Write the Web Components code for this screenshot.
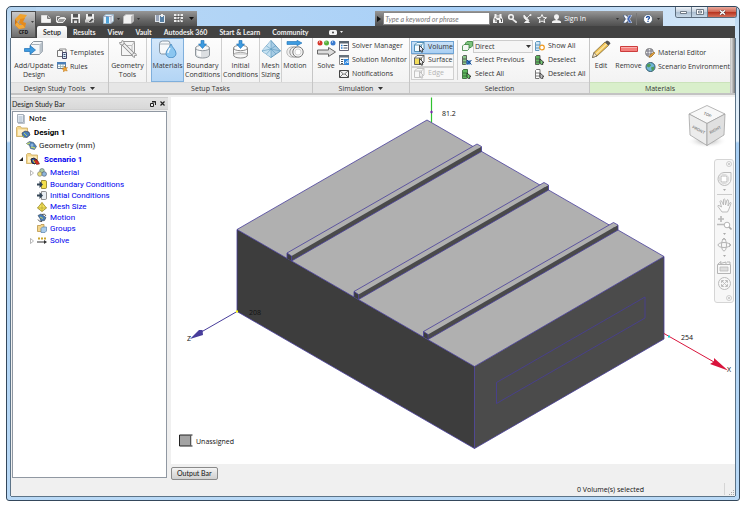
<!DOCTYPE html>
<html lang="en">
<head>
<meta charset="utf-8">
<title>CFD - Design Study</title>
<style>
  body {
    margin: 0;
    padding: 6px;
    box-sizing: border-box;
    min-height: 100vh;
    display: flex;
    background: #fff;
    color: #333;
    font-family: "Open Sans", "Noto Sans", sans-serif;
    font-size: 7px;
  }
</style>
</head>
<body>
<cfd-app></cfd-app>

<script>
// [width, height, markup]
const ICONS = {
  logo: [17, 17, '<path d="M2 6 7 1l7 1-3 4-4 0-3 3z" fill="#f0a22c"/><path d="M2 6v6l4 4 6-1-3-3H7l-3-3z" fill="#c96f14"/><path d="m7 6 5-1-2 4 3 1-1 5-4-4-2-1z" fill="#e58a1c"/><path d="m4 9 3 3h3l2 3-6 1-4-4z" fill="#f3a93a"/>'],
  caret: [5, 3, '<path d="M0 0h5L2.500 3z" fill="currentColor"/>'],
  caretSmall: [3, 2, '<path d="M0 0h3L1.500 2z" fill="currentColor"/>'],
  caretRight: [4, 6, '<path d="M0 0v6l4-3z" fill="#111"/>'],
  newDoc: [10, 8, '<path d="M.5.5h6l3 3v4h-9z" fill="#f4f4f4" stroke="#ddd"/><path d="M6.500.5v3h3" fill="#aaa" stroke="#777"/>'],
  open: [10, 8, '<path d="M.5 7V1.500h3l1 1h4v1.500" fill="none" stroke="#e8e8e8"/><path d="m1 7.500 2-4h7l-3 4z" fill="#999" stroke="#eee"/>'],
  save: [9, 9, '<path d="M0 0h9v9H0z" fill="#eee"/><path d="M2 0h5v3.500H2zM1.500 5h6v4h-6z" fill="#555"/><path d="M3 6.500h3V9H3z" fill="#ddd"/>'],
  saveAs: [10, 9, '<path d="M1 0h8v6H1z" fill="#eee"/><path d="M3 0h4v2.500H3z" fill="#555"/><path d="M0 5.500h9v3H0z" fill="#ccc"/><path d="m3 8 4-4 2 1.500L5.500 9z" fill="#555" stroke="#eee" stroke-width=".7"/>'],
  cubeBlue: [11, 10, '<path d="M.5 2.500 3 .5h7.500v6.500L8 9.500H.5z" fill="#e9f2f8" stroke="#9db8c8"/><path d="M6 2.500V9.500H3V2z" fill="#4fa3d8"/><path d="M8 2.500v7m0-7L10.500.5M.5 2.500H8" stroke="#88a" stroke-width=".6" fill="none"/>'],
  cubeGrey: [11, 10, '<path d="M.5 2.500 3 .5h7.500v6.500L8 9.500H.5z" fill="#f2f2f2" stroke="#bbb"/><path d="M8 9.500v-7L10.500.5v6.500z" fill="#bbb"/>'],
  clipboard: [10, 9, '<path d="M0 1h5v7H0z" fill="#dde3ea"/><path d="M1 2h3M1 4h3M1 6h3" stroke="#568"/><path d="M4.500 1.500h5v7h-5z" fill="#567fa4" stroke="#e3eaf0"/><path d="M6 0h2v3H6z" fill="#eee"/>'],
  table: [10, 9, '<path d="M0 0h9v8H0z" fill="#eee"/><path d="M0 2.500h9M0 5.500h9M3 0v8M6 0v8" stroke="#444" stroke-width=".8"/><path d="m5 4 5 4-3 .5z" fill="#fff" stroke="#333" stroke-width=".5"/>'],
  binoculars: [10, 9, '<path d="M1.500 0h2v1.500H5h1.500V0h2v2L10 6v3H6V6H4v3H0V6l1.500-4z" fill="#f2f2f2"/><path d="M1.500 5h1.500v3M7 5h1.500v3M3.500 3h3" stroke="#555" fill="none"/>'],
  key: [10, 9, '<circle cx="3" cy="3" r="2.300" fill="none" stroke="#f2f2f2" stroke-width="1.600"/><path d="m4.500 4.500 4.500 3.500-1 1-4-3.500z" fill="#f2f2f2" stroke="#f2f2f2" stroke-width=".6"/>'],
  dish: [9, 9, '<path d="M1 1c-1 3 2 6 5 5.500zM4 4l3-3M3 7 1.500 9h5L5 7z" fill="#f2f2f2" stroke="#f2f2f2" stroke-width=".8"/><circle cx="7.500" cy="1" r="1" fill="#f2f2f2"/>'],
  star: [10, 9, '<path d="m5 .5 1.300 2.900 3.200.3L7 5.700l.8 2.900L5 7 2.200 8.600 3 5.700.5 3.700l3.200-.3z" fill="#777" stroke="#f2f2f2"/>'],
  person: [9, 9, '<circle cx="4.500" cy="2.800" r="2.500" fill="#f2f2f2"/><path d="M3.500 4h2v2h-2zM0 9V7.500Q1 6 4.500 6T9 7.500V9z" fill="#f2f2f2"/>'],
  exchange: [9, 8, '<path d="M0 0h3l2 2.500L4 4l1 1.500L3 8H0l2.500-4z" fill="#fff" stroke="#24406f" stroke-width=".6"/><path d="M9 0H6L4 4l2 4h3L6.500 4z" fill="#3d63b4" stroke="#e8eefc" stroke-width=".6"/>'],
  help: [10, 10, '<circle cx="5" cy="5" r="4.500" fill="#fff" stroke="#345" stroke-width=".6"/><path d="M3.500 4Q3.500 2.500 5 2.500T6.500 3.800Q6.500 4.600 5.500 5L5 5.800M5 6.800v1.200" stroke="#1f4f9f" stroke-width="1.300" fill="none"/>'],
  media: [8, 5, '<rect width="8" height="5" rx="1.500" fill="#f2f2f2"/><circle cx="4" cy="2.500" r="1" fill="#444"/>'],
  minimize: [7, 3, '<path d="M.5.5h6v2h-6z" fill="#fff" stroke="#56616d" stroke-width=".8"/>'],
  maximize: [8, 6, '<path d="M.5.5h7v5h-7z" fill="#fff" stroke="#56616d" stroke-width=".8"/><path d="M2.500 2h3v2h-3z" fill="#c7d2de" stroke="#56616d" stroke-width=".7"/>'],
  closeWhite: [7, 5, '<path d="m1 .5 5 4M6 .5l-5 4" stroke="#4b2b2b" stroke-width="2.400"/><path d="m1 .5 5 4M6 .5l-5 4" stroke="#fff" stroke-width="1.500"/>'],

  addUpdate: [20, 16, '<path d="M6.500 3.500 9.500.5h9v10l-3 3h-9z" fill="#f5f7f9" stroke="#8b959e"/><path d="M15.500 13.500v-10l3-3v10z" fill="#b9c2ca"/><path d="M6.500 3.500h9" stroke="#a9b2ba"/><path d="M.5 7.500h5.500V4.500L11.500 9 6 13.500V10.500H.5z" fill="#3d9be0" stroke="#1c6fb4" stroke-width=".7"/>'],
  templates: [11, 11, '<path d="M.5 2.500h5v6h-5z" fill="#fafafa" stroke="#777"/><path d="M2.500 2V1h6.500V4" fill="none" stroke="#888"/><path d="M5.500 4.500h4v6h-4z" fill="#dfe9f4" stroke="#446"/><path d="M6.500 6.500h2M6.500 8.500h2" stroke="#357"/>'],
  rules: [11, 10, '<path d="M.5.5h8v6h-8z" fill="#fff" stroke="#667c96"/><path d="M0 0h9v2.500H0z" fill="#4b7fb8"/><path d="M1 4.500h7M3.500 2v4M6 2v4" stroke="#8aa" stroke-width=".7"/><path d="m7.500 4 .9 1.700 2.100-.2-1.200 1.600 1 1.900-2.300-.4L6.500 10V7.800l-1.700-1L7 6z" fill="#f2a531" stroke="#b26a10" stroke-width=".4"/>'],
  geometry: [18, 18, '<path d="M2.500 5.500 4.500 1.500h11v11l-2.500 3H2.500z" fill="#f5f5f5" stroke="#9a9a9a"/><path d="M13 15.500V5.500l2.500-4M2.500 5.500H13" fill="none" stroke="#bbb"/><path d="m2.500 2.500 13 13" stroke="#888" stroke-width="3.600"/><path d="m2.500 2.500 13 13" stroke="#f1f1f1" stroke-width="2"/><path d="M.5 2.500q0 2.500 2.500 2.500t2-2.500q0-2-2-2L2.500 2.500zM13 14.500q0 2.500 2.500 3l0-2 2 0Q17.500 13 15 13z" fill="#eee" stroke="#888" stroke-width=".8"/>'],
  materials: [19, 18, '<path d="M1.500 3.500Q2 1 4.500 1h5.500Q12 1 12 4v7l-2 3H3.500q-2 0-2-3z" fill="#f6f8fa" stroke="#8696a5"/><path d="M2 4h9" stroke="#aab4bd"/><path d="M13 4c1.500 4 5 6 5 9.500a5 4.300 0 0 1-10 0C8 10 11.500 8 13 4z" fill="#8bc6f0" stroke="#3d85bf" stroke-width=".8"/><path d="M12 8c-1 2-2 3-2 5" stroke="#e9f6ff" stroke-width="1.500" fill="none"/>'],
  boundary: [15, 19, '<path d="M.5 8v7c0 4 14 4 14 0V8z" fill="#dcdfe2" stroke="#90979d"/><path d="M2 8v7l4 2V8z" fill="#fbfbfb"/><ellipse cx="7.500" cy="8" rx="7" ry="2.700" fill="#f8f8f8" stroke="#90979d"/><path d="M6 .5h3V4h2.500l-4 4.500L3.500 4H6z" fill="#3d9be0" stroke="#1c6fb4" stroke-width=".6"/>'],
  initial: [15, 19, '<path d="M.5 8v7c0 4 14 4 14 0V8" fill="#f8f8f8" stroke="#888"/><path d="M.5 15c0-3.500 14-3.500 14 0" fill="#ddd" stroke="#aaa"/><ellipse cx="7.500" cy="8" rx="7" ry="2.700" fill="#fff" stroke="#888"/><path d="M6 .5h3V4h2.500l-4 4.500L3.500 4H6z" fill="#3d9be0" stroke="#1c6fb4" stroke-width=".6"/>'],
  mesh: [20, 18, '<path d="M10 .5 1 11l9 6.500 9.500-6.500z" fill="#a5cbe4" stroke="#4f8cb4" stroke-width=".8"/><path d="M10 .5v17L1 11z" fill="#c6e1f1"/><path d="M10 .5v17M1 11l9-2 9.500 2M5.500 6l4.500 3 5-3.500M5.500 14 10 9l5 5" fill="none" stroke="#5c99be" stroke-width=".6"/>'],
  motion: [18, 18, '<path d="M1 1.500h10V.3L16 3l-5 2.700V4.500H1z" fill="#3d9be0" stroke="#1c6fb4" stroke-width=".6"/><circle cx="6" cy="12" r="5.200" fill="#eee" stroke="#bbb"/><circle cx="9" cy="12" r="5.200" fill="#eee" stroke="#999"/><circle cx="12" cy="12" r="5.200" fill="#f5f5f5" stroke="#777"/><circle cx="12" cy="12" r="3" fill="#fff" stroke="#bbb" stroke-width=".6"/>'],
  solve: [19, 18, '<circle cx="3" cy="3" r="2.500" fill="#d6362b"/><circle cx="9.500" cy="3" r="2.500" fill="#57b03c"/><circle cx="16" cy="3" r="2.500" fill="#3a7bd0"/><path d="M2 2h1M8.500 2h1M15 2h1" stroke="#fff"/><path d="M.5 10h11V7.500l7 4.500-7 4.500V14H.5z" fill="#ddd" stroke="#666"/>'],
  solverManager: [10, 10, '<path d="M.5.5h9v9h-9z" fill="#fff" stroke="#667"/><path d="M0 0h10v2.500H0z" fill="#5a6672"/><path d="M2 4.500h1.500M2 7h1.500" stroke="#2a7fd4" stroke-width="1.500"/><path d="M4.500 4.500h4M4.500 7h4" stroke="#456"/>'],
  solutionMonitor: [10, 10, '<path d="M.5.5h9v9h-9z" fill="#fff" stroke="#888"/><path d="M0 0h10v2.500H0z" fill="#66717c"/><path d="M2 4.500h2.500M2 6.500h2M2 8.500h2" stroke="#456"/><path d="M5 4h5v6H5z" fill="#2f86dc"/><path d="m6 8.500 1.500-2L9 8V5" stroke="#fff" stroke-width=".8" fill="none"/>'],
  notifications: [10, 8, '<path d="M.5.500h9v7h-9z" fill="#f3f3f3" stroke="#444"/><path d="m.5.5 4.500 4 4.500-4M.5 7.500 4 4M9.500 7.500 6 4" fill="none" stroke="#555" stroke-width=".8"/>'],
  volume: [11, 11, '<path d="M.5 3 3 .5h7V7L7.500 9.500h-7z" fill="#f4fbff" stroke="#4487ad" stroke-width=".9"/><path d="M.5 3h7v6.500M7.500 3 10 .5" fill="none" stroke="#4487ad" stroke-width=".8"/><path d="m5.500 3.500 4 4-1.500.3.800 2-1.200.5-.9-2-1.200 1z" fill="#eef" stroke="#222" stroke-width=".8"/>'],
  surface: [11, 11, '<path d="M.5 3 3 .5h7V7L7.500 9.500h-7z" fill="#fff" stroke="#555" stroke-width=".9"/><path d="M1 3.500h6v5.500H1z" fill="#f3dd5b"/><path d="M.5 3h7v6.500M7.500 3 10 .5" fill="none" stroke="#555" stroke-width=".8"/><path d="m5.500 3.500 4 4-1.500.3.800 2-1.200.5-.9-2-1.200 1z" fill="#eee" stroke="#222" stroke-width=".8"/>'],
  edge: [11, 11, '<g fill="none" stroke="#c4c4c4"><path d="M.5 3 3 .5h7V7L7.500 9.500h-7zM.5 3h7v6.500M7.500 3 10 .5"/><path d="m5.500 3.500 4 4-1.500.3.800 2-1.200.5-.9-2-1.200 1z" fill="#eee"/></g>'],
  direct: [11, 10, '<path d="M3.500 2 5 .5h5.500V5L9 6.500H3.500z" fill="#7cc27c" stroke="#36803a" stroke-width=".8"/><path d="M.5 5 2 3.500h5V8L5.500 9.500h-5z" fill="#f4f8f4" stroke="#36803a" stroke-width=".8"/>'],
  selPrevious: [10, 10, '<path d="M.5 1.500 1.500.5h3v8l-1 1h-3z" fill="#8bc98b" stroke="#444" stroke-width=".8"/><path d="M1 4h3M1 7h3" stroke="#444" stroke-width=".8"/><path d="M4.500 5.500h4v4h-4z" fill="#2c74c9"/><path d="m5 5 4.500 4.500M9.500 5 5 9.500" stroke="#174a8a"/>'],
  selAll: [10, 10, '<path d="M.5 1.500 1.500.5h4v8l-1 1h-4z" fill="#5fb85f" stroke="#2a5b2a" stroke-width=".8"/><path d="M1 4h4M1 7h4" stroke="#2a5b2a" stroke-width=".8"/><path d="m5 4 4 3.500-1.500.3.500 1.500-1.500.2-1.500-1z" fill="#6c6" stroke="#222" stroke-width=".8"/>'],
  showAll: [10, 10, '<path d="M.5 1.500 1.500.5h3.500v8l-1 1H.5z" fill="#cfe7f7" stroke="#3f82ad" stroke-width=".8"/><path d="M1 4h4M1 7h4" stroke="#3f82ad" stroke-width=".8"/><circle cx="7" cy="6.500" r="2.300" fill="#fff" stroke="#f09a20" stroke-width="1.200"/>'],
  deselect: [10, 10, '<path d="M.5 1.500 1.500.5h3.500v8l-1 1H.5z" fill="#5fb85f" stroke="#444" stroke-width=".8"/><path d="M1 4h4M1 7h4" stroke="#444" stroke-width=".8"/><path d="m5 4 4 3.500-1.500.3.500 1.500-1.500.2-1.500-1z" fill="#7c7" stroke="#222" stroke-width=".8"/>'],
  deselectAll: [10, 10, '<path d="M.5 1.500 1.500.5h3.500v8l-1 1H.5z" fill="#fff" stroke="#555" stroke-width=".8"/><path d="M1 4h4M1 7h4" stroke="#555" stroke-width=".8"/><path d="m5 4 4 3.500-1.500.3.500 1.500-1.500.2-1.500-1z" fill="#bbb" stroke="#333" stroke-width=".8"/>'],
  edit: [19, 18, '<path d="m.5 17.500 1.500-5L13 2l3.500 3.500L5 16z" fill="#f0c258" stroke="#6d5a2c" stroke-width=".7"/><path d="M3.500 14.500 14.500 4" stroke="#fbe6a2" stroke-width="1.500"/><path d="m13 2 2-1.500q2.500.5 3.500 3L16.500 5.500z" fill="#555"/><path d="m.5 17.500 1.500-5L5 16z" fill="#f4e3c2" stroke="#555" stroke-width=".6"/>'],
  remove: [18, 6, '<path d="M.5.5h17v5H.5z" fill="#f47f7c" stroke="#cc3c3c"/><path d="M1 1.500h16" stroke="#fab0ad"/>'],
  materialEditor: [10, 10, '<circle cx="4.500" cy="4.500" r="4" fill="#e8e8e8" stroke="#666" stroke-width=".8"/><path d="M1 3h7M.5 6h7M3 .5v8M6 .5v8" stroke="#667" stroke-width=".8"/><path d="m4 9.500 1-2.500 4-3 1 1-4 4z" fill="#e8a33c" stroke="#7a5415" stroke-width=".5"/>'],
  environment: [11, 10, '<circle cx="5.500" cy="5" r="4.500" fill="#6fb6d6" stroke="#33576b"/><path d="M2 2.500 5 1.500l1 2-2 2-2-1zM6 5.500l3-1v3L7 9z" fill="#4f9c55"/>'],

  note: [8, 10, '<path d="M.5.5h6v8h-6z" fill="#edf2f7" stroke="#a5afba"/><path d="M7.500 1v8.500H1" stroke="#b9c1ca" fill="none"/><path d="M1.500 3h4M1.500 5h4M1.500 7h4" stroke="#8fa4ba" stroke-width=".8"/>'],
  design: [15, 12, '<path d="M.5 10.500V1.500l1-1h3l1 1.500h6v8.500z" fill="#f4d68b" stroke="#c9a860" stroke-width=".8"/><path d="M2 3.500h8.500v6H2z" fill="#fdf0c8"/><path d="m6 7 3-2 4 1 1 3-3 2.500-4-.5z" fill="#4a7eb8" stroke="#334" stroke-width=".6"/><path d="m8 7 3 3M6 10l2 1" stroke="#b7cf5e"/>'],
  parts: [11, 9, '<path d="m.5 2.500 3-2 4 1 3 4-2 3-4-1-1-3z" fill="#4a7eb8" stroke="#456" stroke-width=".6"/><path d="m1 3 3-1M5 6l4 1" stroke="#b9cf73" stroke-width="1.500"/><circle cx="6" cy="4" r="1.500" fill="#8db3dc"/>'],
  scenario: [15, 12, '<path d="M.5 10.500V1.500l1-1h3l1 1.500h6v8.500z" fill="#f4d68b" stroke="#c9a860" stroke-width=".8"/><path d="M2 3.500h8.500v6H2z" fill="#fdf0c8"/><path d="m5 6 3-1 3 2-2 4-3-1z" fill="#2b5fb0" stroke="#223"/><path d="m9 6 3 2 1.500 3-3 .5-2-3z" fill="#d32c20" stroke="#511" stroke-width=".5"/><path d="m7 7 2 3" stroke="#f2d227"/>'],
  material: [10, 9, '<circle cx="5" cy="2.800" r="2.300" fill="#a9c9a2" stroke="#567" stroke-width=".6"/><circle cx="2.800" cy="6" r="2.300" fill="#e8dd7a" stroke="#776" stroke-width=".6"/><circle cx="7.200" cy="6" r="2.300" fill="#8fb6dc" stroke="#456" stroke-width=".6"/>'],
  bc: [10, 9, '<path d="M4.500.5h4q1 0 1 1.500v5q0 1.500-1 1.500h-4z" fill="#f4e04d" stroke="#8a7a20" stroke-width=".8"/><path d="M0 3.500h2.500V1L6 4.500 2.500 8V5.500H0z" fill="#345"/>'],
  ic: [10, 9, '<path d="M4.500.5h4q1 0 1 1.500v5q0 1.500-1 1.500h-4z" fill="#e9eef3" stroke="#777" stroke-width=".8"/><path d="M0 3.500h2.500V1L6 4.500 2.500 8V5.500H0z" fill="#345"/>'],
  meshSize: [10, 10, '<path d="M5 .5 9.500 6 5 9.500.5 6z" fill="#f5e35a" stroke="#97862a" stroke-width=".8"/><path d="M.5 6h9M5 .5v9" stroke="#b09d31" stroke-width=".7"/>'],
  motionSmall: [10, 9, '<path d="m1 2.500 3-1.500 5 3.500-1.500 3-3.500.5-1-2.500z" fill="#4a7eb8" stroke="#345" stroke-width=".6"/><path d="M5 1.500Q8 0 9 3M1 6.500Q2 9 5 8.500" stroke="#333" fill="none" stroke-width=".8"/><path d="m3 4 3 1.500" stroke="#c2d36a"/>'],
  groups: [10, 9, '<path d="M.5 7.500v-6h3l.5-1h3v7z" fill="#f4d68b" stroke="#b9944a" stroke-width=".8"/><path d="M4 4.500 5.500 3h4v4L8 8.500H4z" fill="#a9cbea" stroke="#5a83ab" stroke-width=".7"/>'],
  solveSmall: [10, 7, '<path d="M1 1.500h2M4 1.500h2M7 1.500h2" stroke="#c9a52e" stroke-width="1.800"/><path d="M0 4.500h7V3l3 2-3 2V5.500H0z" fill="#333"/>'],
  closed: [4, 6, '<path d="M.5.5 3.500 3l-3 2.500z" fill="#fff" stroke="#999" stroke-width=".7"/>'],
  opened: [4, 4, '<path d="M4 0v4H0z" fill="#222"/>'],
  restore: [6, 6, '<path d="M2 .5h3.500V4M2 1h4" stroke="#222" fill="none"/><path d="M.5 2.500h3v3h-3z" fill="#eee" stroke="#222"/>'],
  closeBlack: [5, 5, '<path d="m.5.5 4 4M4.500.5l-4 4" stroke="#222" stroke-width="1.200"/>'],
  grip: [6, 6, '<path d="M4 0h1v1H4zM4 2h1v1H4zM4 4h1v1H4zM2 2h1v1H2zM2 4h1v1H2zM0 4h1v1H0z" fill="#aaa"/>'],

  navClose: [6, 6, '<circle cx="3" cy="3" r="2.500" fill="none" stroke="#bbb" stroke-width=".7"/><path d="m2 2 2 2M4 2 2 4" stroke="#bbb" stroke-width=".7"/>'],
  navWheel: [15, 14, '<path d="M7 .5h7v6.500A6.500 6.500 0 1 1 7 .5z" fill="#f7f7f7" stroke="#bbb"/><rect x="4" y="4" width="6" height="6" rx="1.500" fill="#fff" stroke="#bbb"/><circle cx="7" cy="7" r="4.700" fill="none" stroke="#ccc" stroke-width=".7"/>'],
  navPan: [15, 15, '<path d="M5 14 1 8.500Q.5 7 2 7.500L4.500 9 3 3.500Q3.500 2 4.500 3L6.500 7 6.500 1.500Q7.200.3 8 1.500L8.500 7 10 2Q11.200 1.200 11.500 2.500L11 8l2-3.500q1.200-.3 1 1L12 11l-1.500 3z" fill="#fafafa" stroke="#b5b5b5" stroke-width=".9"/>'],
  navZoom: [15, 14, '<path d="M4 0v6M1 3h6M0 8.500h7" stroke="#bbb" stroke-width="1.700"/><circle cx="10" cy="9" r="2.800" fill="#fff" stroke="#b5b5b5"/><path d="m12 11 2.500 2.500" stroke="#aaa" stroke-width="1.700"/>'],
  navOrbit: [14, 14, '<ellipse cx="7" cy="7" rx="6" ry="2.500" fill="none" stroke="#b5b5b5"/><ellipse cx="7" cy="7" rx="2.500" ry="6" fill="none" stroke="#b5b5b5"/><path d="m5 2 2-2 2 2M12 5l2 2-2 2" fill="none" stroke="#b5b5b5"/>'],
  navCamera: [14, 14, '<path d="M.5 4.500h13v9H.5z" fill="#f8f8f8" stroke="#b5b5b5"/><path d="M3 7h8v4H3z" fill="#ddd" stroke="#bbb" stroke-width=".8"/><path d="M1 4 4 1.500l-.5 2L9 2v2M10 2h3v2" fill="none" stroke="#b5b5b5"/>'],
  navFit: [13, 13, '<circle cx="6.500" cy="6.500" r="6" fill="#f8f8f8" stroke="#bbb"/><path d="M3.500 3.500h2.200L3.500 5.700zM9.500 3.500v2.200L7.300 3.500zM3.500 9.500V7.300l2.200 2.200zM9.500 9.500H7.300l2.200-2.200z" fill="#aaa" stroke="#aaa" stroke-width=".5"/><path d="m4 4 5 5M9 4 4 9" stroke="#bbb" stroke-width=".8"/>'],
};

const define = (tag, html, setup) => {
  const template = document.createElement('template');
  template.innerHTML = html;
  customElements.define(tag, class extends HTMLElement {
    constructor() {
      super();
      this.attachShadow({ mode: 'open' }).append(template.content.cloneNode(true));
    }

    connectedCallback() {
      if (setup) setup(this, this.shadowRoot);
    }
  });
};

define('cfd-icon', `
  <style>:host { display: block; flex: none; } svg { display: block; }</style>
`, (host, root) => {
  const [w, h, body] = ICONS[host.getAttribute('name')];
  root.innerHTML += `<svg width="${w}" height="${h}" viewBox="0 0 ${w} ${h}" aria-hidden="true">${body}</svg>`;
});

// ---- title bar ----

define('title-tools', `
  <style>
    :host { display: flex; align-items: center; height: 15px; box-sizing: border-box; color: #222;
      background: linear-gradient(#979797, #676767 60%, #505050); }
    button { border: 0; padding: 0; background: none; color: #333; display: block; }
    .files { display: flex; gap: 5px; margin-left: 5px; }
    .views { display: flex; align-items: center; gap: 3px; margin-left: 8px; }
    .docs { display: flex; align-items: center; gap: 9px; margin: 0 3px 0 15px; }
    .docs button:last-child { color: #111; margin-left: -4px; }
  </style>
  <div class="files">
    <button aria-label="New"><cfd-icon name="newDoc"></cfd-icon></button>
    <button aria-label="Open"><cfd-icon name="open"></cfd-icon></button>
    <button aria-label="Save"><cfd-icon name="save"></cfd-icon></button>
    <button aria-label="Save as"><cfd-icon name="saveAs"></cfd-icon></button>
  </div>
  <div class="views">
    <button aria-label="Visual style"><cfd-icon name="cubeBlue"></cfd-icon></button>
    <button aria-label="Visual style options"><cfd-icon name="caretSmall"></cfd-icon></button>
    <button aria-label="Outline"><cfd-icon name="cubeGrey"></cfd-icon></button>
    <button aria-label="Outline options"><cfd-icon name="caretSmall"></cfd-icon></button>
  </div>
  <div class="docs">
    <button aria-label="Clipboard"><cfd-icon name="clipboard"></cfd-icon></button>
    <button aria-label="Table"><cfd-icon name="table"></cfd-icon></button>
    <button aria-label="Customize"><cfd-icon name="caret"></cfd-icon></button>
  </div>
`);

define('info-center', `
  <style>
    :host { display: flex; align-items: center; height: 15px; color: #fff;
      background: linear-gradient(#979797, #676767 60%, #505050); }
    button { border: 0; padding: 0; background: none; color: #333; display: block; font: inherit; }
    .toggle { width: 8px; padding-left: 2px; }
    input { width: 107px; height: 13px; box-sizing: border-box; border: 1px solid #888; padding: 0 1px;
      background: #fff; font: italic 7px Lato, sans-serif; color: #666; }
    input::placeholder { color: #777; opacity: 1; }
    .tools { display: flex; align-items: center; gap: 5px; margin-left: 3px; }
    .sign { display: flex; align-items: center; gap: 3px; color: #fff; margin-right: 30px; }
    .end { display: flex; align-items: center; gap: 4px; padding-right: 3px; }
    .rule { width: 1px; height: 12px; background: #777; margin-right: 2px; }
  </style>
  <button class="toggle" aria-label="Collapse search"><cfd-icon name="caretRight"></cfd-icon></button>
  <input type="text" placeholder="Type a keyword or phrase" aria-label="Search">
  <div class="tools">
    <button aria-label="Search"><cfd-icon name="binoculars"></cfd-icon></button>
    <button aria-label="Subscription"><cfd-icon name="key"></cfd-icon></button>
    <button aria-label="Communication"><cfd-icon name="dish"></cfd-icon></button>
    <button aria-label="Favorites"><cfd-icon name="star"></cfd-icon></button>
    <button class="sign"><cfd-icon name="person"></cfd-icon>Sign In</button>
  </div>
  <div class="end">
    <button aria-label="Account options"><cfd-icon name="caretSmall"></cfd-icon></button>
    <button aria-label="Exchange"><cfd-icon name="exchange"></cfd-icon></button>
    <span class="rule"></span>
    <button aria-label="Help"><cfd-icon name="help"></cfd-icon></button>
    <button aria-label="Help options"><cfd-icon name="caretSmall"></cfd-icon></button>
  </div>
`);

define('window-controls', `
  <style>
    :host { display: flex; align-self: flex-start; border: 1px solid #5b6c7d; border-top: 0; border-radius: 0 0 3px 3px; overflow: hidden; }
    button { width: 16px; height: 10px; padding: 0; border: 0; border-right: 1px solid #6d7f90;
      display: grid; place-items: center; background: linear-gradient(#eef3f8, #c3d0de 50%, #a9bccf 50%, #c9dae9); }
    .close { width: 28px; border: 0; background: linear-gradient(#e9a99c, #cf6450 50%, #b5301c 50%, #d4705a); }
  </style>
  <button aria-label="Minimize"><cfd-icon name="minimize"></cfd-icon></button>
  <button aria-label="Maximize"><cfd-icon name="maximize"></cfd-icon></button>
  <button class="close" aria-label="Close"><cfd-icon name="closeWhite"></cfd-icon></button>
`);

define('app-menu', `
  <style>
    :host { display: block; }
    button { width: 100%; height: 100%; box-sizing: border-box; padding: 1px 0 0; border: 1px solid #4c4c4c;
      background: linear-gradient(#c9c9c9, #8b8b8b 70%, #6c6c6c); display: flex; flex-direction: column; align-items: center; color: #111; }
    .top { display: flex; align-items: center; gap: 1px; color: #444; }
    .name { font: bold 5px/5px "Open Sans", sans-serif; }
  </style>
  <button aria-label="Application menu">
    <span class="top"><cfd-icon name="logo"></cfd-icon><cfd-icon name="caretSmall"></cfd-icon></span>
    <span class="name">CFD</span>
  </button>
`);

define('ribbon-tabs', `
  <style>
    :host { display: flex; align-items: stretch; height: 12px; padding-left: 1px; background: #424242; color: #f0f0f0; }
    button { border: 0; background: none; color: inherit; font: bold 7px/11px Lato, sans-serif; padding: 0 6px; white-space: nowrap; }
    button[aria-selected=true] { background: linear-gradient(#fff, #e9e9e9); color: #333; border-radius: 2px 2px 0 0; }
    .media { display: flex; align-items: center; gap: 3px; margin-left: 8px; }
  </style>
  <button role="tab" aria-selected="true">Setup</button>
  <button role="tab">Results</button>
  <button role="tab">View</button>
  <button role="tab">Vault</button>
  <button role="tab">Autodesk 360</button>
  <button role="tab">Start &amp; Learn</button>
  <button role="tab">Community</button>
  <button class="media" aria-label="Ribbon display"><cfd-icon name="media"></cfd-icon><cfd-icon name="caretSmall"></cfd-icon></button>
`);

// ---- ribbon ----

define('ribbon-panel', `
  <style>
    :host { display: flex; flex-direction: column; min-width: 0; border-right: 1px solid #c6c6c6; box-sizing: border-box; background: linear-gradient(#fdfdfd, #f0f0f0); }
    .body { display: flex; height: 44px; min-width: 0; }
    .label { height: 11px; line-height: 11px; display: flex; justify-content: center; align-items: center; gap: 5px; background: #e6e6e6; border-top: 1px solid #dadada; box-sizing: border-box; }
    cfd-icon { display: none; }
    :host([menu]) cfd-icon { display: block; }
    :host([accent]) .label { background: #d9efcb; border-color: #cbe3bb; }
  </style>
  <div class="body"><slot></slot></div>
  <div class="label"><span></span><cfd-icon name="caret"></cfd-icon></div>
`, (host, root) => {
  root.querySelector('span').textContent = host.getAttribute('label');
});

define('ribbon-button', `
  <style>
    :host { display: flex; flex: none; box-sizing: border-box; }
    :host([divided]) { border-right: 1px solid #cfcfcf; }
    button { flex: 1; min-width: 0; border: 1px solid transparent; padding: 1px 0 0; background: none; color: inherit; font: inherit; line-height: 9px; white-space: nowrap;
      display: flex; flex-direction: column; align-items: center; gap: 3px; }
    .art { height: 18px; display: grid; place-items: center; }
    :host([active]) button { background: linear-gradient(#d3e7fa, #b3d5f5); border-color: #7fafdc; }
  </style>
  <button><span class="art"></span><span><slot></slot></span></button>
`, (host, root) => {
  root.querySelector('.art').innerHTML = `<cfd-icon name="${host.getAttribute('icon')}"></cfd-icon>`;
});

define('ribbon-column', `
  <style>:host { display: flex; flex: none; flex-direction: column; justify-content: center; }</style>
  <slot></slot>
`);

define('ribbon-item', `
  <style>
    :host { display: block; }
    button { height: 14px; width: 100%; box-sizing: border-box; border: 0; padding: 0; background: none; color: inherit; font: inherit; line-height: 12px; white-space: nowrap;
      display: flex; align-items: center; gap: 3px; }
    .art { width: 10px; display: grid; place-items: center; }
    :host([toggle]) button { height: 13px; border: 1px solid #d0d0d0; padding: 0 2px; background: #f8f8f8; }
    :host([toggle]) .art { width: 11px; }
    :host([active]) button { background: linear-gradient(#c9e1f8, #a9cff3); border-color: #6fa3d4; }
    button:disabled { color: #b5b5b5; }
  </style>
  <button><span class="art"></span><slot></slot></button>
`, (host, root) => {
  root.querySelector('.art').innerHTML = `<cfd-icon name="${host.getAttribute('icon')}"></cfd-icon>`;
  root.querySelector('button').disabled = host.hasAttribute('disabled');
});

define('selection-mode', `
  <style>
    :host { display: flex; align-items: center; height: 14px; }
    label { position: relative; display: flex; align-items: center; }
    select { appearance: none; width: 60px; height: 13px; border: 1px solid #ccc; border-radius: 0; background: #f5f5f5; padding: 0 1px; margin: 0; color: inherit; font: inherit; line-height: 11px; }
    label cfd-icon { position: absolute; right: 2px; pointer-events: none; }
  </style>
  <cfd-icon name="direct"></cfd-icon>
  <label><select aria-label="Selection mode"><option>Direct</option></select><cfd-icon name="caret"></cfd-icon></label>
`);

define('cfd-ribbon', `
  <style>
    :host { display: grid; grid-template-columns: 98fr 204fr 97fr 180fr 141fr 4px; border-bottom: 2px solid #c3c3c3; }
    .rule { width: 1px; margin: 2px 4px 2px 3px; background: #d0d0d0; }
    .end { background: linear-gradient(90deg, #e4e4e4, #777); }
    .gap { width: 4px; }
    .w22 { width: 22px; } .w26 { width: 26px; } .w33 { width: 33px; } .w38 { width: 38px; } .w46 { width: 46px; }
    .modes { width: 44px; padding-left: 1px; box-sizing: border-box; }
    .picks { width: 73px; }
  </style>
  <ribbon-panel label="Design Study Tools" menu>
    <ribbon-button class="w46" icon="addUpdate">Add/Update<br>Design</ribbon-button>
    <ribbon-column>
      <ribbon-item icon="templates">Templates</ribbon-item>
      <ribbon-item icon="rules">Rules</ribbon-item>
    </ribbon-column>
  </ribbon-panel>
  <ribbon-panel label="Setup Tasks">
    <ribbon-button class="w38" icon="geometry" divided>Geometry<br>Tools</ribbon-button>
    <span class="gap"></span>
    <ribbon-button class="w33" icon="materials" active>Materials</ribbon-button>
    <ribbon-button class="w38" icon="boundary" divided>Boundary<br>Conditions</ribbon-button>
    <ribbon-button class="w38" icon="initial" divided>Initial<br>Conditions</ribbon-button>
    <ribbon-button class="w22" icon="mesh" divided>Mesh<br>Sizing</ribbon-button>
    <ribbon-button class="w26" icon="motion">Motion</ribbon-button>
  </ribbon-panel>
  <ribbon-panel label="Simulation" menu>
    <ribbon-button class="w26" icon="solve">Solve</ribbon-button>
    <ribbon-column>
      <ribbon-item icon="solverManager">Solver Manager</ribbon-item>
      <ribbon-item icon="solutionMonitor">Solution Monitor</ribbon-item>
      <ribbon-item icon="notifications">Notifications</ribbon-item>
    </ribbon-column>
  </ribbon-panel>
  <ribbon-panel label="Selection">
    <ribbon-column class="modes">
      <ribbon-item icon="volume" toggle active>Volume</ribbon-item>
      <ribbon-item icon="surface" toggle>Surface</ribbon-item>
      <ribbon-item icon="edge" toggle disabled>Edge</ribbon-item>
    </ribbon-column>
    <span class="rule"></span>
    <ribbon-column class="picks">
      <selection-mode></selection-mode>
      <ribbon-item icon="selPrevious">Select Previous</ribbon-item>
      <ribbon-item icon="selAll">Select All</ribbon-item>
    </ribbon-column>
    <ribbon-column>
      <ribbon-item icon="showAll">Show All</ribbon-item>
      <ribbon-item icon="deselect">Deselect</ribbon-item>
      <ribbon-item icon="deselectAll">Deselect All</ribbon-item>
    </ribbon-column>
  </ribbon-panel>
  <ribbon-panel label="Materials" accent>
    <ribbon-button class="w22" icon="edit">Edit</ribbon-button>
    <ribbon-button class="w33" icon="remove">Remove</ribbon-button>
    <ribbon-column>
      <ribbon-item icon="materialEditor">Material Editor</ribbon-item>
      <ribbon-item icon="environment">Scenario Environment</ribbon-item>
    </ribbon-column>
  </ribbon-panel>
  <span class="end"></span>
`);

// ---- design study bar ----

define('tree-item', `
  <style>
    :host { display: block; color: #0000f0; }
    .row { display: flex; align-items: center; gap: 3px; min-height: 11px; white-space: nowrap; line-height: 11px; }
    .twist { width: 5px; display: grid; place-items: center; }
    .art { width: 10px; display: grid; place-items: center; }
    :host([plain]) { color: #222; }
    :host([plain]) .row, :host([expander]) .row { min-height: 13px; }
    :host([folder]) .row { min-height: 14px; font-weight: bold; }
    :host([folder]) .art { width: 15px; }
    :host([root]) { color: #000; }
    :host([root]) .twist { display: none; }
  </style>
  <div class="row"><span class="twist"></span><span class="art"></span><span class="text"></span></div>
  <slot></slot>
`, (host, root) => {
  const icon = name => `<cfd-icon name="${name}"></cfd-icon>`;
  const twist = host.getAttribute('expander');
  host.setAttribute('role', 'treeitem');
  if (twist) root.querySelector('.twist').innerHTML = icon(twist);
  root.querySelector('.art').innerHTML = icon(host.getAttribute('icon'));
  root.querySelector('.text').textContent = host.getAttribute('label');
});

define('design-study-bar', `
  <style>
    :host { display: flex; flex-direction: column; box-sizing: border-box; width: 157px; padding-bottom: 18px; }
    header { display: flex; align-items: center; height: 13px; padding: 0 3px 0 1px; background: linear-gradient(#e2e2e2, #d8d8d8); border: 1px solid #cfcfcf; border-width: 1px 0; box-sizing: border-box; color: #222; font-family: Lato, sans-serif; }
    h2 { flex: 1; margin: 0; font: inherit; }
    header button { border: 0; background: none; padding: 0; margin-left: 4px; }
    .tree { flex: 1; margin: 1px 1px 0; border: 1px solid #9098a2; background: #fff; font: 8px Roboto, "Noto Sans", sans-serif; }
    .leaf { padding-left: 5px; }
    .children { padding-left: 11px; }
    tree-item[root] { padding-left: 3px; }
  </style>
  <header>
    <h2>Design Study Bar</h2>
    <button aria-label="Float"><cfd-icon name="restore"></cfd-icon></button>
    <button aria-label="Close"><cfd-icon name="closeBlack"></cfd-icon></button>
  </header>
  <div class="tree" role="tree">
    <tree-item root plain icon="note" label="Note"></tree-item>
    <tree-item root folder icon="design" label="Design 1"></tree-item>
    <div class="leaf"><tree-item plain icon="parts" label="Geometry (mm)"></tree-item></div>
    <div class="leaf">
      <tree-item folder expander="opened" icon="scenario" label="Scenario 1">
        <div class="children">
          <tree-item expander="closed" icon="material" label="Material"></tree-item>
          <tree-item icon="bc" label="Boundary Conditions"></tree-item>
          <tree-item icon="ic" label="Initial Conditions"></tree-item>
          <tree-item icon="meshSize" label="Mesh Size"></tree-item>
          <tree-item icon="motionSmall" label="Motion"></tree-item>
          <tree-item icon="groups" label="Groups"></tree-item>
          <tree-item expander="closed" icon="solveSmall" label="Solve"></tree-item>
        </div>
      </tree-item>
    </div>
  </div>
`);

// ---- model view ----

const rib = (dx, dy) => `
  <g transform="translate(${dx} ${dy})">
    <path d="M287 252.500 477 143.500l4.500 2.500L291.500 255.500z" fill="#b0b0b0"/>
    <path d="M291.500 255.500 481.500 146v5L291.500 260.500z" fill="#4a4a4a"/>
    <path d="M287 252.500l4.500 3v5l-4.500-2.500z" fill="#3d3d3d"/>
    <path d="M287 258v-5.500L477 143.500l4.500 2.500v5L291.500 260.500v-5L287 252.500" class="edge"/>
  </g>`;

define('model-scene', `
  <style>
    :host { display: block; min-height: 0; }
    svg { display: block; width: 100%; height: 100%; }
    .edge { fill: none; stroke: #483d9b; stroke-width: .8; }
    text { fill: #111; }
  </style>
  <svg viewBox="171 97 564 366" preserveAspectRatio="xMidYMid meet">
    <path d="M431.500 97v25" stroke="#2fc12f" stroke-width="1.200"/>
    <path d="M237 229 427 119.500 664 256 474.500 366z" fill="#b0b0b0"/>
    <path d="M237 229 474.500 366v82L237 311z" fill="#3d3d3d"/>
    <path d="M474.500 366 664 256v82.500L474.500 448z" fill="#4b4b4b"/>
    <path d="M237 229 427 119.500 664 256v82.500L474.500 448 237 311zL474.500 366 664 256M474.500 366v82" class="edge"/>
    <path d="M496.500 382 645 296.500v21L496.500 403z" class="edge"/>
    ${rib(0, 0)}${rib(67, 38.5)}${rib(136.5, 78.5)}
    <path d="M430 111.500h3M431.500 110v3" stroke="#7a1fb0"/>
    <text x="442" y="115">81.2</text>
    <path d="M237 311 196 334.500" stroke="#483d9b"/>
    <path d="M190 338.500 199 329.500l3.500 0 .5 5z" fill="#483d9b"/>
    <path d="M236 310h2v2h-2z" fill="#ff0"/>
    <text x="249" y="314">208</text>
    <text x="187" y="340">Z</text>
    <path d="M664 333 714 361.500" stroke="#d9143c"/>
    <path d="M728 370 710 363.500l4-2.500 0-3.500z" fill="#d9143c"/>
    <path d="M668 335h2v2h-2z" fill="#1cc"/>
    <text x="681" y="339">254</text>
    <text x="727" y="371">X</text>
    <path d="M179.500 434.500h12v11h-12z" fill="#a3a3a3"/>
    <path d="M192.500 434.500h-13v11h13" fill="none" stroke="#222"/>
    <path d="M190.500 435v10" stroke="#555"/>
    <text x="196" y="443">Unassigned</text>
  </svg>
`);

define('view-cube', `
  <style>
    :host { display: block; }
    svg { display: block; }
    text { font: bold 4px "Liberation Sans", sans-serif; fill: #8b8b8b; text-anchor: middle; }
  </style>
  <svg width="44" height="48" viewBox="0 0 44 48" role="img" aria-label="View cube">
    <defs><radialGradient id="shade"><stop offset="0" stop-color="#999"/><stop offset="1" stop-color="#fff" stop-opacity="0"/></radialGradient></defs>
    <ellipse cx="22" cy="38" rx="20" ry="7" fill="url(#shade)"/>
    <path d="M22 2.500 40 11 22 20.500 4 11z" fill="#f8f8f8" stroke="#999" stroke-width=".7"/>
    <path d="M4 11 22 20.500v22L5 32z" fill="#ececec" stroke="#999" stroke-width=".7"/>
    <path d="M40 11 22 20.500v22L39 32z" fill="#e0e0e0" stroke="#999" stroke-width=".7"/>
    <text transform="translate(22 13) rotate(25)">TOP</text>
    <text transform="translate(13 28) rotate(28)">FRONT</text>
    <text transform="translate(31 28) rotate(-28)">RIGHT</text>
  </svg>
`);

define('nav-bar', `
  <style>
    :host { display: flex; flex-direction: column; align-items: center; box-sizing: border-box; width: 20px; border: 1px solid #d5d5d5; border-radius: 3px; background: #f7f7f7; color: #aaa; padding: 1px 0; }
    button { border: 0; padding: 0; background: none; color: inherit; display: block; }
    .small { align-self: flex-end; margin-right: 1px; }
    .tools { display: flex; flex-direction: column; align-items: center; gap: 3px; margin: 5px 0; }
    hr { width: 15px; margin: 0; border: 0; border-top: 1px solid #ccc; }
  </style>
  <button class="small" aria-label="Close"><cfd-icon name="navClose"></cfd-icon></button>
  <div class="tools">
    <button aria-label="Steering wheel"><cfd-icon name="navWheel"></cfd-icon></button>
    <cfd-icon name="caretSmall"></cfd-icon>
    <hr>
    <button aria-label="Pan"><cfd-icon name="navPan"></cfd-icon></button>
    <button aria-label="Zoom"><cfd-icon name="navZoom"></cfd-icon></button>
    <cfd-icon name="caretSmall"></cfd-icon>
    <button aria-label="Orbit"><cfd-icon name="navOrbit"></cfd-icon></button>
    <cfd-icon name="caretSmall"></cfd-icon>
    <button aria-label="Look at"><cfd-icon name="navCamera"></cfd-icon></button>
    <button aria-label="Fit"><cfd-icon name="navFit"></cfd-icon></button>
  </div>
  <button class="small" aria-label="Options"><cfd-icon name="navClose"></cfd-icon></button>
`);

define('model-view', `
  <style>
    :host { display: grid; position: relative; background: #fff; min-height: 0; }
    view-cube { position: absolute; top: 6px; right: 6px; }
    nav-bar { position: absolute; top: 62px; right: 1px; }
  </style>
  <model-scene></model-scene>
  <view-cube></view-cube>
  <nav-bar></nav-bar>
`);

define('status-bar', `
  <style>
    :host { display: grid; grid-template-rows: 18px 14px; color: #111; }
    .output { justify-self: start; align-self: center; height: 13px; padding: 0 5px; border: 1px solid #8a8a8a; border-radius: 2px; background: linear-gradient(#f4f4f4, #e0e0e0 50%, #d0d0d0); color: #111; font: 7px/11px Lato, sans-serif; }
    .line { display: flex; justify-content: flex-end; align-items: center; }
    .split { width: 1px; height: 12px; margin: 0 4px 0 80px; background: #d5d5d5; }
    cfd-icon { align-self: flex-end; }
  </style>
  <button class="output">Output Bar</button>
  <div class="line"><span>0 Volume(s) selected</span><span class="split"></span><cfd-icon name="grip"></cfd-icon></div>
`);

define('cfd-app', `
  <style>
    :host { flex: 1; display: flex; flex-direction: column; box-sizing: border-box; border: 1px solid #34485c; border-radius: 5px 5px 3px 3px; padding: 0 4px 4px;
      background: linear-gradient(#b3d3f0, #c4def5 18px, #dcebf8 60px, #e4f0fa 134px, #a9d0f5 136px, #b9d9f6);
      overflow: hidden; }
    .head { display: grid; grid-template-columns: 25px 1fr; grid-template-rows: 19px 12px; }
    app-menu { grid-row: 1 / 3; margin-top: 4px; }
    .title { display: flex; align-items: flex-end; background: linear-gradient(90deg, #b9d8f5, #a9d0f7 60%, #d8e9f8); }
    .space { flex: 1; }
    window-controls { margin: 0 -2px 0 12px; }
    .frame { flex: 1; display: flex; flex-direction: column; background: #f0f0f0; box-shadow: -1px 0 #5d7488, 1px 0 #5d7488, 0 1px #5d7488; }
    main { flex: 1; display: flex; gap: 3px; padding-top: 2px; }
    .work { flex: 1; display: flex; flex-direction: column; }
    model-view { flex: 1; }
  </style>
  <div class="head">
    <app-menu></app-menu>
    <div class="title">
      <title-tools></title-tools>
      <span class="space"></span>
      <info-center></info-center>
      <window-controls></window-controls>
    </div>
    <ribbon-tabs role="tablist"></ribbon-tabs>
  </div>
  <div class="frame">
    <cfd-ribbon></cfd-ribbon>
    <main>
      <design-study-bar></design-study-bar>
      <div class="work">
        <model-view></model-view>
        <status-bar></status-bar>
      </div>
    </main>
  </div>
`);
</script>
</body>
</html>
